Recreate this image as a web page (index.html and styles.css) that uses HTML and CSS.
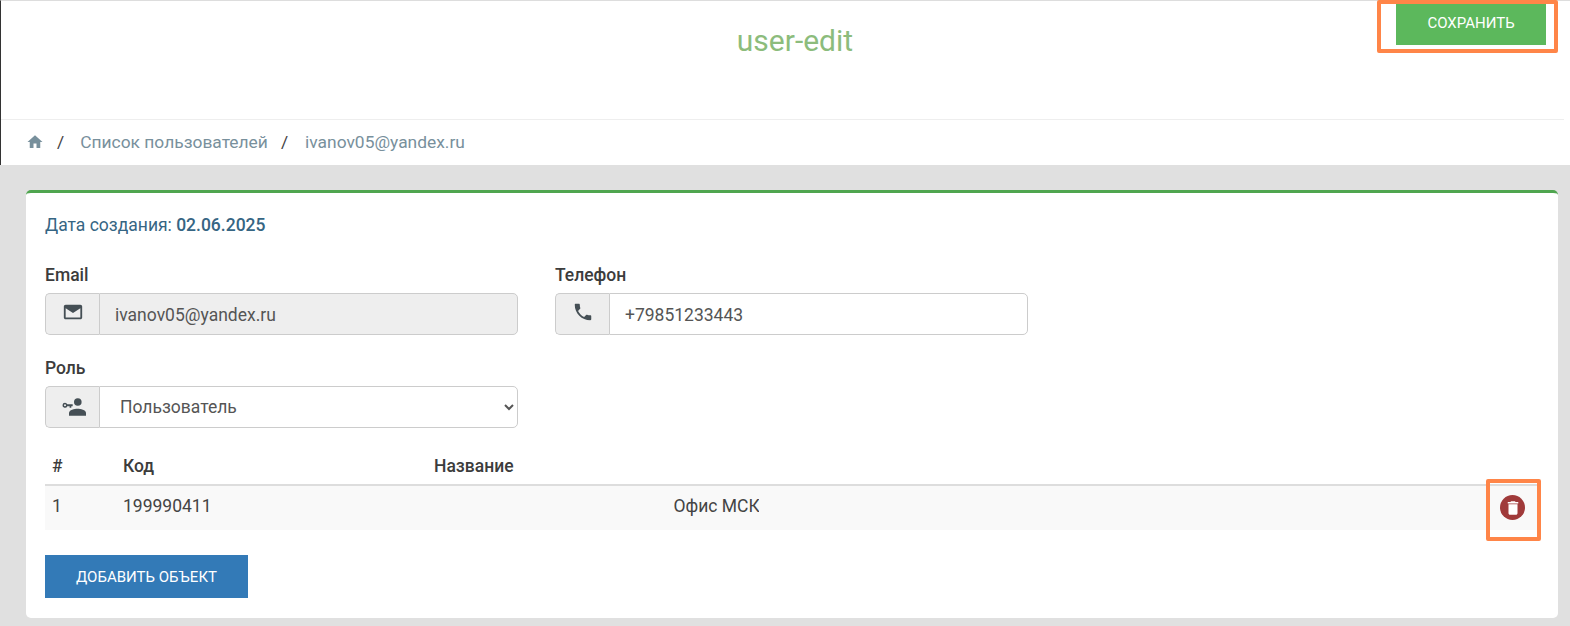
FILE: index.html
```html
<!DOCTYPE html>
<html lang="ru">
<head>
<meta charset="utf-8">
<title>user-edit</title>
<link rel="stylesheet" href="styles.css">
</head>
<body>
<div class="page">
  <header class="topbar">
    <h1 class="title">user-edit</h1>
    <button class="btn btn-save" type="button">Сохранить</button>
    <span class="mark mark-save"></span>
  </header>
  <nav class="crumbs">
    <svg class="home" viewBox="0 0 24 24"><path d="M10 20v-6h4v6h5v-8h3L12 3 2 12h3v8z"/></svg>
    <span class="sep">/</span>
    <a class="crumb">Список пользователей</a>
    <span class="sep">/</span>
    <a class="crumb">ivanov05@yandex.ru</a>
  </nav>
  <main class="content">
    <section class="card">
      <p class="created">Дата создания: <b>02.06.2025</b></p>
      <div class="fields">
        <div class="field">
          <label class="label">Email</label>
          <div class="group">
            <span class="addon"><svg viewBox="0 0 24 24"><path d="M20 4H4c-1.1 0-1.99.9-1.99 2L2 18c0 1.1.9 2 2 2h16c1.1 0 2-.9 2-2V6c0-1.1-.9-2-2-2zm0 14H4V8l8 5 8-5v10z"/></svg></span>
            <input class="control" type="text" value="ivanov05@yandex.ru" disabled>
          </div>
        </div>
        <div class="field">
          <label class="label">Телефон</label>
          <div class="group">
            <span class="addon"><svg viewBox="0 0 24 24"><path d="M6.62 10.79c1.44 2.83 3.76 5.14 6.59 6.59l2.2-2.2c.27-.27.67-.36 1.02-.24 1.12.37 2.33.57 3.57.57.55 0 1 .45 1 1V20c0 .55-.45 1-1 1-9.39 0-17-7.61-17-17 0-.55.45-1 1-1h3.5c.55 0 1 .45 1 1 0 1.25.2 2.45.57 3.57.11.35.03.74-.25 1.02l-2.2 2.2z"/></svg></span>
            <input class="control" type="text" value="+79851233443">
          </div>
        </div>
        <div class="field">
          <label class="label">Роль</label>
          <div class="group">
            <span class="addon"><svg class="icon-role" viewBox="0 0 28 24"><circle cx="18.800" cy="9" r="3.800"/><path d="M10 22.700v-2.700c0-3 5.500-4.300 8.500-4.300s8.500 1.300 8.500 4.300v2.700z"/><path fill-rule="evenodd" d="M6 9.800a2.500 2.500 0 0 1 2.300 1.500h5.400v1.900h-1.400v1.500h-1.700v-1.500H8.300A2.500 2.500 0 1 1 6 9.800zm0 1.500a1 1 0 1 0 0 2 1 1 0 0 0 0-2z"/></svg></span>
            <select class="control select"><option>Пользователь</option></select>
          </div>
        </div>
      </div>
      <table class="table">
        <colgroup>
          <col class="c-num"><col class="c-code"><col class="c-gap"><col><col class="c-act-col">
        </colgroup>
        <thead>
          <tr>
            <th>#</th>
            <th>Код</th>
            <th colspan="3">Название</th>
          </tr>
        </thead>
        <tbody>
          <tr>
            <td>1</td>
            <td>199990411</td>
            <td></td>
            <td><span class="clip">Офис МСК</span></td>
            <td class="c-act">
              <span class="del"><svg viewBox="0 0 24 24"><path d="M6 19c0 1.100.9 2 2 2h8c1.100 0 2-.9 2-2V7H6v12zM19 4h-3.500l-1-1h-5l-1 1H5v2h14V4z"/></svg></span>
              <span class="mark mark-del"></span>
            </td>
          </tr>
        </tbody>
      </table>
      <button class="btn btn-add" type="button">Добавить объект</button>
    </section>
  </main>
</div>
</body>
</html>
```
FILE: styles.css
```css
* { box-sizing: border-box; }
html, body { margin: 0; height: 100%; overflow: hidden; }
body {
  font-family: Roboto, "Liberation Sans", sans-serif;
  font-size: 17.500px;
  color: #444;
  background: #e0e0e0;
}
.page { min-height: 100%; }
.topbar {
  position: relative;
  display: flex;
  align-items: flex-start;
  height: 120px;
  padding-left: 193px;
  background: #fff;
  border-top: 1px solid #ddd;
  border-left: 1px solid #333;
}
.topbar::after {
  content: "";
  position: absolute;
  left: 0;
  right: 6px;
  bottom: 0;
  height: 1px;
  background: #eee;
}
.title {
  flex: 1;
  margin: 21px 0 0;
  font-size: 30px;
  line-height: 38px;
  font-weight: 400;
  text-align: center;
  color: #8cbc7c;
}
.btn {
  border: 0;
  border-radius: 0;
  color: #fff;
  font: 400 15px/20px Roboto, "Liberation Sans", sans-serif;
  text-transform: uppercase;
}
.btn-save {
  flex: none;
  width: 150px;
  height: 44px;
  margin-right: 24px;
  background: #5cb85c;
}
.mark { position: absolute; border: 4px solid #ff8548; border-radius: 2px; pointer-events: none; }
.mark-save { top: -1px; left: 1376px; width: 181px; height: 53px; }
.crumbs {
  display: flex;
  align-items: center;
  height: 45px;
  padding: 0 0 2px 25px;
  background: #fff;
  border-left: 1px solid #333;
  font-size: 17.400px;
}
.home { width: 18px; height: 18px; fill: #78909c; }
.sep { margin: 0 16px 0 13px; color: #444; }
.crumb { color: #78909c; }
.crumb + .sep { margin: 0 17px 0 13px; }
.content { padding: 25px 12px 0 26px; }
.card {
  height: 428px;
  padding: 21px 19px 0;
  background: #fff;
  border-top: 3px solid #4fa54f;
  border-radius: 5px;
}
.created { margin: 0 0 28px; line-height: 22px; color: #366583; }
.created b { font-weight: 500; }
.fields {
  display: grid;
  grid-template-columns: 473px 473px;
  column-gap: 37px;
  row-gap: 22px;
}
.label { display: block; margin-bottom: 7px; font-weight: 500; font-size: 17.500px; line-height: 22px; color: #3c3c3c; }
.group { display: flex; height: 42px; }
.addon {
  display: flex;
  align-items: center;
  justify-content: center;
  flex: none;
  width: 54px;
  background: #eee;
  border: 1px solid #ccc;
  border-right: 0;
  border-radius: 5px 0 0 5px;
}
.addon svg { width: 22px; height: 22px; fill: #454f55; margin-top: -4px; }
.addon .icon-role { width: 28px; height: 24px; }
.control {
  flex: 1;
  min-width: 0;
  height: 100%;
  padding: 2px 15px 0;
  border: 1px solid #ccc;
  border-radius: 0 5px 5px 0;
  background: #fff;
  color: #555;
  font: 400 17.500px Roboto, "Liberation Sans", sans-serif;
}
.control:disabled { background: #eee; color: #555; opacity: 1; }
.select { padding: 0 0 0 16px; }
.table {
  width: 1494px;
  margin-top: 20px;
  border-collapse: collapse;
  table-layout: fixed;
}
.table th {
  height: 37px;
  padding: 0 7px 0 0;
  text-align: left;
  font-weight: 500;
  font-size: 17.500px;
  color: #3c3c3c;
  border-bottom: 2px solid #ddd;
}
.table th:first-child, .table td:first-child { padding-left: 7px; }
.c-num { width: 78px; }
.c-code { width: 311px; }
.c-gap { width: 239.500px; }
.c-act-col { width: 60px; }
.table td { height: 45px; padding: 0 0 4px; background: #f9f9f9; }
.clip { display: inline-block; width: 85.500px; overflow: hidden; white-space: nowrap; vertical-align: top; }
.c-act { position: relative; }
.del {
  position: absolute;
  top: 9px;
  right: 14px;
  display: flex;
  align-items: center;
  justify-content: center;
  width: 25px;
  height: 25px;
  border-radius: 50%;
  background: #a03a3a;
}
.del svg { width: 18px; height: 18px; fill: #fff; }
.mark-del { top: -7px; right: -2px; width: 55px; height: 62px; }
.btn-add {
  display: block;
  width: 203px;
  height: 43px;
  margin-top: 25px;
  background: #337ab7;
}
```
